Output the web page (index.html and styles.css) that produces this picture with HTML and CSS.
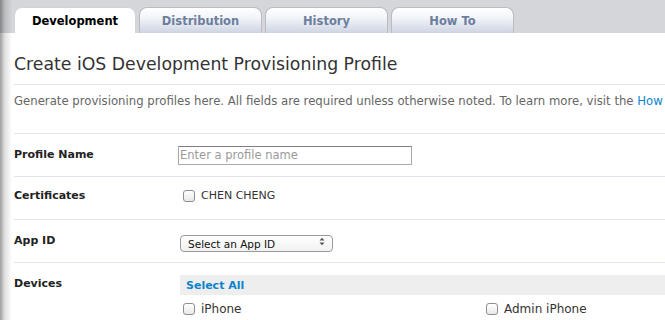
FILE: index.html
```html
<!DOCTYPE html>
<html lang="en">
<head>
  <meta charset="UTF-8" />
  <title>Create iOS Development Provisioning Profile</title>
  <link rel="stylesheet" href="styles.css">
</head>
<body>
  <div class="edge-shadow"></div>

  <nav class="tabbar">
    <a class="tab active" href="#">Development</a>
    <a class="tab" href="#">Distribution</a>
    <a class="tab" href="#">History</a>
    <a class="tab" href="#">How To</a>
  </nav>

  <main class="page">
    <h1>Create iOS Development Provisioning Profile</h1>
    <p class="intro">Generate provisioning profiles here. All fields are required unless otherwise noted. To learn more, visit the <a href="#">How To</a> section.</p>

    <div class="form-row">
      <div class="form-label">Profile Name</div>
      <div class="form-value">
        <input class="text-input" type="text" placeholder="Enter a profile name">
      </div>
    </div>

    <div class="form-row row-tight">
      <div class="form-label">Certificates</div>
      <div class="form-value">
        <label class="check cert"><input type="checkbox"> CHEN CHENG</label>
      </div>
    </div>

    <div class="form-row">
      <div class="form-label">App ID</div>
      <div class="form-value">
        <div class="select-wrap">
          <select class="select">
            <option>Select an App ID</option>
          </select>
          <svg class="select-arrows" width="6" height="9" viewBox="0 0 6 9">
            <path d="M0.5 3.5 L3 0.8 L5.5 3.5 Z M0.5 5.5 L3 8.2 L5.5 5.5 Z" fill="#555"/>
          </svg>
        </div>
      </div>
    </div>

    <div class="form-row">
      <div class="form-label">Devices</div>
      <div class="form-value">
        <div class="select-all"><a href="#">Select All</a></div>
        <div class="device-list">
          <label class="check"><input type="checkbox"> iPhone</label>
          <label class="check"><input type="checkbox"> Admin iPhone</label>
        </div>
      </div>
    </div>
  </main>
</body>
</html>
```

FILE: styles.css
```css
:root {
  --bar: #d4d6d9;
  --line: #e1e4ea;
  --text: #222;
  --muted: #666;
  --link: #0c84cc;
  --tab-text: #6c7e9d;
}

* {
  box-sizing: border-box;
}

html, body {
  margin: 0;
  padding: 0;
  background: #fff;
  color: var(--text);
  font-family: "DejaVu Sans", "Liberation Sans", sans-serif;
  overflow: hidden;
}

.edge-shadow {
  position: fixed;
  top: 0;
  left: 0;
  bottom: 0;
  width: 12px;
  background: linear-gradient(to right, rgba(0, 0, 0, 0.38), rgba(0, 0, 0, 0.12) 40%, rgba(0, 0, 0, 0));
  pointer-events: none;
  z-index: 5;
}

/* tabs */
.tabbar {
  display: flex;
  align-items: flex-end;
  gap: 3px;
  height: 33px;
  padding-left: 14px;
  background: var(--bar);
}

.tab {
  width: 123px;
  height: 26px;
  display: flex;
  align-items: center;
  justify-content: center;
  padding-top: 1px;
  border: 1px solid #b9bdc3;
  border-bottom: none;
  border-radius: 8px 8px 0 0;
  background: linear-gradient(to bottom, #ffffff, #f2f4f8 40%, #cdd4e2);
  color: var(--tab-text);
  font-size: 11.5px;
  font-weight: 700;
  text-decoration: none;
}

.tab.active {
  width: 122px;
  background: #fff;
  border-color: #d0d3d7;
  color: #000;
}

/* content */
.page {
  width: 1000px;
  padding-left: 14px;
}

h1 {
  margin: 19px 0 0;
  padding-bottom: 8px;
  border-bottom: 1px solid var(--line);
  font-size: 17.3px;
  line-height: 24px;
  font-weight: 400;
  color: #333;
}

.intro {
  margin: 7px 0 0;
  padding-bottom: 23px;
  border-bottom: 1px solid var(--line);
  font-size: 11.7px;
  line-height: 18px;
  color: var(--muted);
  white-space: nowrap;
}

.intro a {
  color: var(--link);
  text-decoration: none;
}

.form-row {
  display: flex;
  align-items: flex-start;
  padding: 11px 0;
  border-bottom: 1px solid var(--line);
}

.form-row.row-tight {
  padding: 9px 0 13px;
}

.form-label {
  width: 166px;
  flex: none;
  font-size: 11px;
  font-weight: 700;
  line-height: 20px;
  color: var(--text);
}

.form-value {
  flex: 1;
  min-height: 20px;
  display: flex;
  flex-direction: column;
  justify-content: center;
}

.text-input {
  width: 234px;
  height: 19px;
  margin: 0 0 0 -2px;
  padding: 0 1px;
  border: 1px solid #a9a9a9;
  border-top-color: #7e7e7e;
  border-radius: 0;
  font-family: inherit;
  font-size: 11.5px;
  color: #333;
  outline: none;
}

.text-input::placeholder {
  color: #9a9a9a;
}

.check {
  display: flex;
  align-items: center;
  gap: 6px;
  padding-left: 3px;
  font-size: 12px;
  line-height: 20px;
  color: #333;
}

.check.cert {
  font-size: 11px;
}

.check input {
  appearance: none;
  width: 12px;
  height: 12px;
  margin: 0;
  border: 1px solid #8e8e8e;
  border-radius: 3px;
  background: linear-gradient(to bottom, #ffffff, #e9e9e9);
}

.select-wrap {
  position: relative;
  width: 153px;
  height: 17px;
}

.select {
  appearance: none;
  width: 100%;
  height: 17px;
  padding: 0 14px 0 7px;
  border: 1px solid #9a9a9a;
  border-radius: 4px;
  background: linear-gradient(to bottom, #ffffff, #f1f1f1);
  font-family: inherit;
  font-size: 10.5px;
  color: #111;
}

.select-arrows {
  position: absolute;
  right: 8px;
  top: 4px;
  pointer-events: none;
}

.select-all {
  height: 20px;
  display: flex;
  align-items: center;
  padding-left: 6px;
  margin-top: 1px;
  background: #eeeeee;
}

.select-all a {
  color: var(--link);
  font-size: 11px;
  font-weight: 700;
  text-decoration: none;
}

.device-list {
  display: grid;
  grid-template-columns: 303px 303px 1fr;
  margin-top: 4px;
}
```
